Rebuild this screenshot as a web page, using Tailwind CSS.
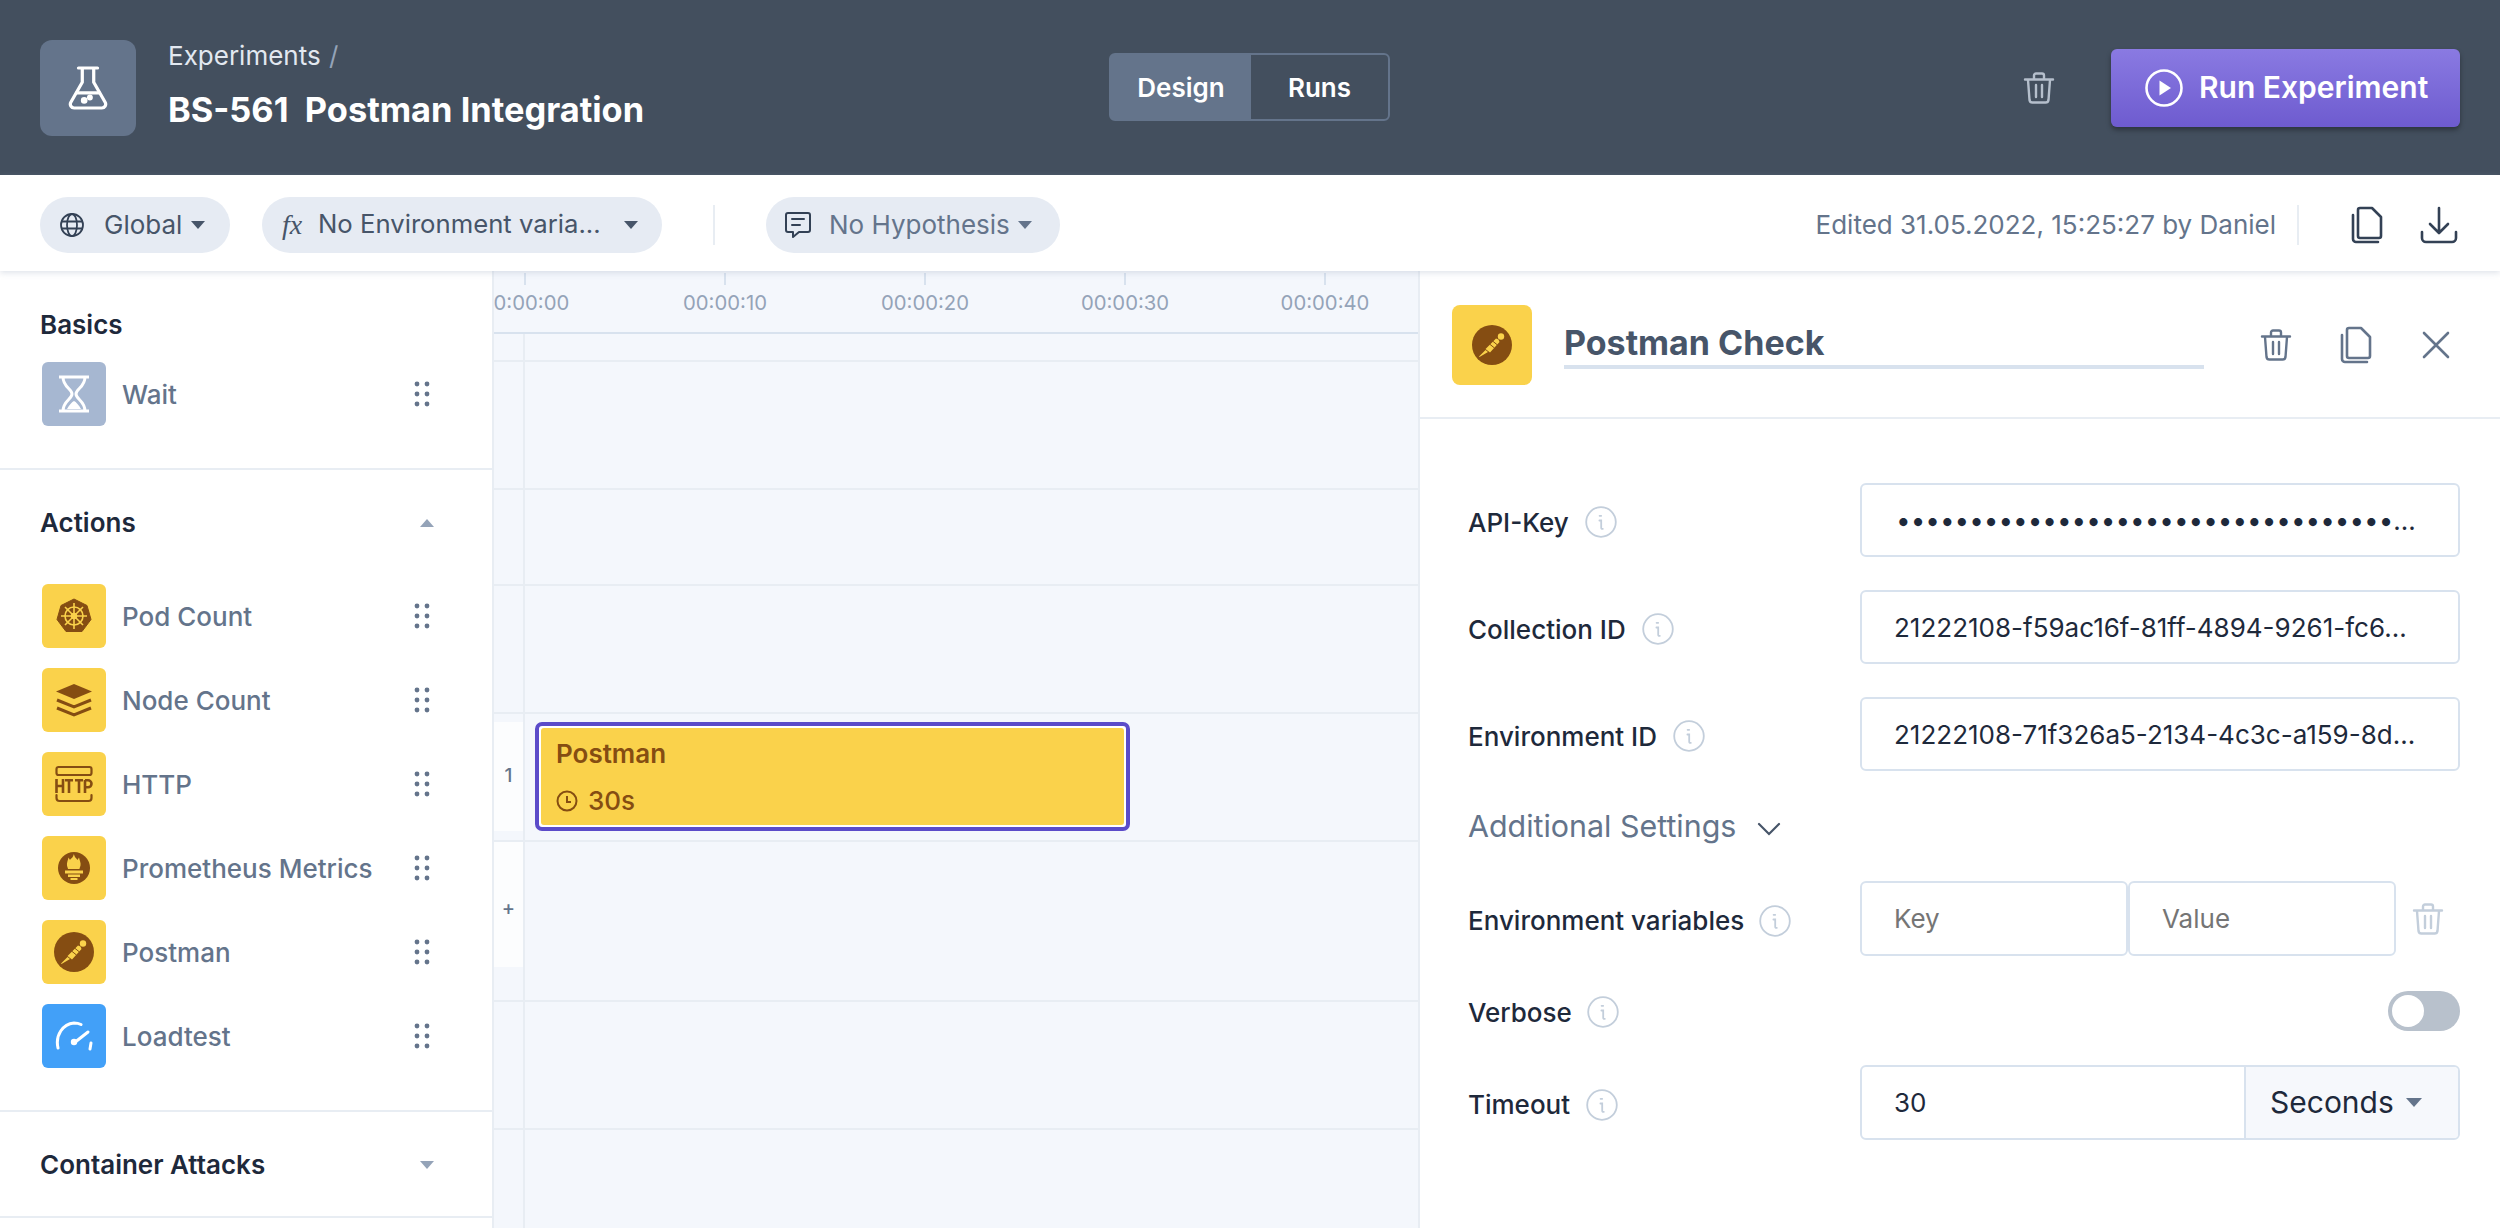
<!DOCTYPE html>
<html lang="en">
<head>
  <meta charset="UTF-8" />
  <title>BS-561 Postman Integration</title>
  <script src="https://cdn.jsdelivr.net/npm/@tailwindcss/browser@4"></script>
</head>
<body class="font-['Inter',sans-serif] w-[2500px] h-[1228px] overflow-hidden bg-white text-[#1e293b]">
  <!-- shared icons -->
  <svg class="hidden">
    <symbol id="trash" viewBox="0 0 34 34"><path d="M3 8.5h28M12 7.5V4.5a2 2 0 0 1 2-2h6a2 2 0 0 1 2 2v3M6 9l1.5 20a3 3 0 0 0 3 2.5h13a3 3 0 0 0 3-2.5L28 9M14 14v12M20 14v12" fill="none" stroke="currentColor" stroke-width="2.4" stroke-linecap="round" stroke-linejoin="round"/></symbol>
    <symbol id="copy" viewBox="0 0 34 38"><path d="M10 2h12l9 9v19a2 2 0 0 1-2 2H10a2 2 0 0 1-2-2V4a2 2 0 0 1 2-2zM3 9v24a3 3 0 0 0 3 3h22" fill="none" stroke="currentColor" stroke-width="2.6" stroke-linecap="round" stroke-linejoin="round"/></symbol>
    <symbol id="grip" viewBox="0 0 16 26"><g fill="currentColor"><circle cx="3" cy="3" r="2.4"/><circle cx="13" cy="3" r="2.4"/><circle cx="3" cy="13" r="2.4"/><circle cx="13" cy="13" r="2.4"/><circle cx="3" cy="23" r="2.4"/><circle cx="13" cy="23" r="2.4"/></g></symbol>
    <symbol id="info" viewBox="0 0 32 32"><circle cx="16" cy="16" r="14.8" fill="none" stroke="currentColor" stroke-width="1.8"/><path d="M14.6 9.8h1.6M14.4 14.5h1.8v7.2q0 1.4 1.6 1.2" fill="none" stroke="currentColor" stroke-width="1.8" stroke-linecap="round"/></symbol>
    <symbol id="postman" viewBox="0 0 40 40"><circle cx="20" cy="20" r="20" fill="#854d12"/><circle cx="29" cy="11.5" r="3.2" fill="#fad24b"/><path d="M26.5 14.5 27.5 17 18 27.5l-4.500-3.500L24 13.500zM13.500 25l2.500 2-8.500 5-.5-.5z" fill="#fad24b"/><path d="M17.500 19l5 4M20.500 16l5 4" stroke="#854d12" stroke-width="1"/></symbol>
  </svg>

  <!-- top bar -->
  <header class="h-[175px] bg-[#434f5e] flex items-center pl-[40px] pr-[40px] relative">
    <div class="w-[96px] h-[96px] rounded-[12px] bg-[#64748b] flex items-center justify-center">
      <svg class="w-[40px] h-[44px]" viewBox="0 0 42 46" fill="none" stroke="white" stroke-width="3.4" stroke-linecap="round" stroke-linejoin="round"><path d="M11 2h20M15 2v15L3 38a4 4 0 0 0 3.500 6h29a4 4 0 0 0 3.500-6L27 17V2"/><path d="M9 28h24"/><circle cx="17" cy="36" r="1.800" fill="white"/><circle cx="23" cy="33" r="1.400" fill="white"/></svg>
    </div>
    <div class="ml-[32px] w-[941px] -mt-[6px]">
      <div class="text-[26px] leading-[32px] text-[#e2e8f0] font-normal">Experiments <span class="text-[#94a3b8] ml-[1px]">/</span></div>
      <div class="mt-[18px] text-[34.400px] leading-[40px] font-bold text-white whitespace-pre">BS-561  Postman Integration</div>
    </div>
    <div class="flex h-[68px] w-[281px] -mt-[1px] rounded-[6px] border-2 border-[#64748b] text-[26px] font-semibold text-white">
      <div class="w-[140px] bg-[#64748b] flex items-center justify-center">Design</div>
      <div class="flex-1 flex items-center justify-center">Runs</div>
    </div>
    <svg class="w-[34px] h-[34px] ml-[632px] text-[#b5bfcc]"><use href="#trash"/></svg>
    <div class="ml-[55px] w-[349px] h-[78px] rounded-[6px] bg-gradient-to-b from-[#8a7ae2] to-[#6e5bcf] shadow-[0_3px_5px_rgba(0,0,0,0.35)] flex items-center pl-[34px] text-white text-[30px] font-semibold">
      <svg class="w-[38px] h-[38px]" viewBox="0 0 38 38"><circle cx="19" cy="19" r="17.5" fill="none" stroke="white" stroke-width="2.6"/><path d="M14.500 11.500 26 19l-11.500 7.500z" fill="white"/></svg>
      <span class="ml-[16px]">Run Experiment</span>
    </div>
  </header>

  <!-- toolbar -->
  <div class="h-[96px] bg-white flex items-center pl-[40px] pr-[40px] pt-[3px] relative z-10 shadow-[0_2px_6px_rgba(148,163,184,0.3)] text-[#475569]">
    <div class="w-[190px] h-[56px] rounded-full bg-[#e6ebf3] flex items-center pl-[20px] text-[26px]">
      <svg class="w-[24px] h-[24px]" viewBox="0 0 24 24" fill="none" stroke="#334155" stroke-width="1.8"><circle cx="12" cy="12" r="11"/><ellipse cx="12" cy="12" rx="5" ry="11"/><path d="M1.500 8.500h21M1.500 15.500h21"/></svg>
      <span class="ml-[20px]">Global</span>
      <span class="ml-[9px] w-0 h-0 border-x-[7px] border-x-transparent border-t-[8px] border-t-[#475569]"></span>
    </div>
    <div class="ml-[32px] w-[400px] h-[56px] rounded-full bg-[#e6ebf3] flex items-center pl-[20px] text-[25.700px]">
      <span class="font-['Liberation_Serif',serif] italic text-[28px] w-[36px]">fx</span>
      <span>No Environment varia...</span>
      <span class="ml-[23px] w-0 h-0 border-x-[7px] border-x-transparent border-t-[8px] border-t-[#475569]"></span>
    </div>
    <div class="ml-[51px] w-[2px] h-[40px] bg-[#e8edf3]"></div>
    <div class="ml-[51px] w-[294px] h-[56px] rounded-full bg-[#e6ebf3] flex items-center pl-[18px] text-[26px] text-[#64748b]">
      <svg class="w-[28px] h-[28px]" viewBox="0 0 28 28" fill="none" stroke="#334155" stroke-width="2" stroke-linejoin="round" stroke-linecap="round"><path d="M4 2h20a2 2 0 0 1 2 2v15a2 2 0 0 1-2 2h-9l-6 5v-5H4a2 2 0 0 1-2-2V4a2 2 0 0 1 2-2zM8 8h12M8 14h8"/></svg>
      <span class="ml-[17px]">No Hypothesis</span>
      <span class="ml-[8px] w-0 h-0 border-x-[7px] border-x-transparent border-t-[8px] border-t-[#64748b]"></span>
    </div>
    <div class="ml-auto text-[26px] text-[#64748b]">Edited 31.05.2022, 15:25:27 by Daniel</div>
    <div class="ml-[21px] w-[2px] h-[40px] bg-[#e8edf3]"></div>
    <svg class="ml-[51px] w-[34px] h-[38px] text-[#334155]"><use href="#copy"/></svg>
    <svg class="ml-[36px] w-[38px] h-[38px] mr-[2px]" viewBox="0 0 38 38" fill="none" stroke="#334155" stroke-width="2.6" stroke-linecap="round" stroke-linejoin="round"><path d="M19 2v24M10 18l9 9 9-9M2 26v6a4 4 0 0 0 4 4h26a4 4 0 0 0 4-4v-6"/></svg>
  </div>

  <main class="flex h-[957px]">
    <!-- step palette -->
    <aside class="w-[494px] shrink-0 border-r-2 border-[#e8edf3] text-[26px] font-medium text-[#64748b]">
      <section class="h-[199px] border-b-2 border-[#e8edf3] pt-[38px] pl-[40px]">
        <h2 class="text-[26px] leading-[32px] font-semibold text-[#1e293b]">Basics</h2>
        <div class="mt-[21px] flex items-center pl-[2px] pr-[62px]">
          <div class="w-[64px] h-[64px] rounded-[6px] bg-[#a6b7d1] flex items-center justify-center">
            <svg class="w-[32px] h-[38px]" viewBox="0 0 32 38" fill="none" stroke="white" stroke-width="3"><path d="M1 2h30M1 36h30M5 2c0 10 9 12 9 17s-9 7-9 17M27 2c0 10-9 12-9 17s9 7 9 17"/><path d="M9 34c2-4 5-7 7-8 2 1 5 4 7 8z" fill="white" stroke="none"/></svg>
          </div>
          <span class="ml-[16px]">Wait</span>
          <svg class="ml-auto w-[16px] h-[26px] text-[#64748b]"><use href="#grip"/></svg>
        </div>
      </section>

      <section class="border-b-2 border-[#e8edf3] pt-[37px] pb-[42px] pl-[40px]">
        <div class="flex items-center justify-between pr-[58px]">
          <h2 class="text-[26px] leading-[32px] font-semibold text-[#1e293b]">Actions</h2>
          <span class="w-0 h-0 border-x-[7px] border-x-transparent border-b-[8px] border-b-[#94a3b8]"></span>
        </div>
        <div class="mt-[45px] flex flex-col gap-[20px] pl-[2px] pr-[62px]">
          <div class="flex items-center">
            <div class="w-[64px] h-[64px] rounded-[6px] bg-[#fad24b] flex items-center justify-center">
              <svg class="w-[36px] h-[36px]" viewBox="0 0 36 36"><path d="M18 1 31 7.500l4 14-9 12H10l-9-12 4-14z" fill="#854d12" stroke="#854d12" stroke-linejoin="round"/><g fill="none" stroke="#fad24b" stroke-width="1.6"><circle cx="18" cy="18" r="9"/><circle cx="18" cy="18" r="2.500"/><path d="M18 5v26M5 18h26M9 9l18 18M27 9 9 27"/></g></svg>
            </div>
            <span class="ml-[16px]">Pod Count</span>
            <svg class="ml-auto w-[16px] h-[26px]"><use href="#grip"/></svg>
          </div>
          <div class="flex items-center">
            <div class="w-[64px] h-[64px] rounded-[6px] bg-[#fad24b] flex items-center justify-center">
              <svg class="w-[38px] h-[34px]" viewBox="0 0 38 34"><path d="M19 1 37 8.500 19 16 1 8.500z" fill="#854d12"/><path d="M2 17l17 7 17-7M2 25l17 7 17-7" fill="none" stroke="#854d12" stroke-width="3"/></svg>
            </div>
            <span class="ml-[16px]">Node Count</span>
            <svg class="ml-auto w-[16px] h-[26px]"><use href="#grip"/></svg>
          </div>
          <div class="flex items-center">
            <div class="w-[64px] h-[64px] rounded-[6px] bg-[#fad24b] flex items-center justify-center">
              <svg class="w-[40px] h-[38px]" viewBox="0 0 40 38" fill="none" stroke="#854d12" stroke-width="2.2" stroke-linecap="round"><rect x="2.500" y="2" width="35" height="8" rx="2"/><path d="M2.500 30v3a3 3 0 0 0 3 3h29a3 3 0 0 0 3-3v-3"/><path stroke-width="2.600" stroke-linecap="butt" d="M2.500 14v14M9 14v14M2.500 21H9M11 15.300h8M15 15v13M21 15.300h8M25 15v13M31 15v13M31 15.300h3a3.500 3.500 0 0 1 0 7h-3"/></svg>
            </div>
            <span class="ml-[16px]">HTTP</span>
            <svg class="ml-auto w-[16px] h-[26px]"><use href="#grip"/></svg>
          </div>
          <div class="flex items-center">
            <div class="w-[64px] h-[64px] rounded-[6px] bg-[#fad24b] flex items-center justify-center">
              <svg class="w-[32px] h-[32px]" viewBox="0 0 32 32"><circle cx="16" cy="16" r="16" fill="#854d12"/><path d="M16 2.500c.5 3 2.500 3.500 3.500 5.500.5-1 1-1.500 1.500-2.500.5 3 2 5 1.500 8-.3 1.500-1 2.500-1 3.500h-11.500c0-1-.8-2-1-3.500-.5-3 1-5 1.500-8 .5 1 1 1.500 1.500 2.500 1-2 3.500-2.500 3.500-5.500z" fill="#fad24b"/><path d="M7 18.500h18v3H7zM10 22.500h12v2.500H10zM12.500 26h7v2h-7z" fill="#fad24b"/></svg>
            </div>
            <span class="ml-[16px]">Prometheus Metrics</span>
            <svg class="ml-auto w-[16px] h-[26px]"><use href="#grip"/></svg>
          </div>
          <div class="flex items-center">
            <div class="w-[64px] h-[64px] rounded-[6px] bg-[#fad24b] flex items-center justify-center">
              <svg class="w-[40px] h-[40px]"><use href="#postman"/></svg>
            </div>
            <span class="ml-[16px]">Postman</span>
            <svg class="ml-auto w-[16px] h-[26px]"><use href="#grip"/></svg>
          </div>
          <div class="flex items-center">
            <div class="w-[64px] h-[64px] rounded-[6px] bg-[#42a0f8] flex items-center justify-center">
              <svg class="w-[38px] h-[30px]" viewBox="0 0 38 30" fill="none" stroke="white" stroke-width="3" stroke-linecap="round"><path d="M3 27C0 14 8 3 19 2c3 0 5 .5 7 1.500"/><path d="M36 22l-1 6"/><path d="M19 22 33 11"/><circle cx="19" cy="21" r="3.200" fill="white" stroke="none"/></svg>
            </div>
            <span class="ml-[16px]">Loadtest</span>
            <svg class="ml-auto w-[16px] h-[26px]"><use href="#grip"/></svg>
          </div>
        </div>
      </section>

      <section class="border-b-2 border-[#e8edf3] pt-[37px] pb-[35px] pl-[40px]">
        <div class="flex items-center justify-between pr-[58px]">
          <h2 class="text-[26px] leading-[32px] font-semibold text-[#1e293b]">Container Attacks</h2>
          <span class="w-0 h-0 border-x-[7px] border-x-transparent border-t-[8px] border-t-[#94a3b8]"></span>
        </div>
      </section>
    </aside>

    <!-- timeline -->
    <div class="w-[926px] shrink-0 bg-[#f4f7fc] relative overflow-hidden">
      <div class="h-[63px] border-b-2 border-[#d8e2ee] relative text-[20.300px] text-[#94a3b8] overflow-hidden">
        <div class="flex h-full w-[1000px] -ml-[69px] pt-[2px]">
          <div class="w-[200px] shrink-0 flex flex-col items-center"><i class="w-[2px] h-[12px] bg-[#d8e2ee]"></i><span class="mt-[3px]">00:00:00</span></div>
          <div class="w-[200px] shrink-0 flex flex-col items-center"><i class="w-[2px] h-[12px] bg-[#d8e2ee]"></i><span class="mt-[3px]">00:00:10</span></div>
          <div class="w-[200px] shrink-0 flex flex-col items-center"><i class="w-[2px] h-[12px] bg-[#d8e2ee]"></i><span class="mt-[3px]">00:00:20</span></div>
          <div class="w-[200px] shrink-0 flex flex-col items-center"><i class="w-[2px] h-[12px] bg-[#d8e2ee]"></i><span class="mt-[3px]">00:00:30</span></div>
          <div class="w-[200px] shrink-0 flex flex-col items-center"><i class="w-[2px] h-[12px] bg-[#d8e2ee]"></i><span class="mt-[3px]">00:00:40</span></div>
        </div>
      </div>
      <div class="flex flex-col">
        <div class="h-[28px] border-b-2 border-[#e8edf3]"></div>
        <div class="h-[128px] border-b-2 border-[#e8edf3]"></div>
        <div class="h-[96px] border-b-2 border-[#e8edf3]"></div>
        <div class="h-[128px] border-b-2 border-[#e8edf3]"></div>
        <div class="h-[128px] border-b-2 border-[#e8edf3]"></div>
        <div class="h-[160px] border-b-2 border-[#e8edf3]"></div>
        <div class="h-[128px] border-b-2 border-[#e8edf3]"></div>
      </div>
      <!-- lane gutter -->
      <div class="absolute left-[29px] top-[63px] bottom-0 w-[2px] bg-[#e8edf3]"></div>
      <div class="absolute left-0 top-[451px] w-[29px] h-[109px] bg-[#fcfdfe] flex items-center justify-center text-[19px] font-medium text-[#64748b]">1</div>
      <div class="absolute left-0 top-[571px] w-[29px] h-[125px] bg-[#fcfdfe] flex justify-center pt-[51px] text-[20px] font-medium text-[#64748b]">+</div>
      <!-- step block on the canvas -->
      <div class="absolute left-[41px] top-[451px] w-[595px] h-[109px] rounded-[7px] border-4 border-[#5b4bc9] bg-white p-[2px]">
        <div class="h-full rounded-[3px] bg-[#fad24b] pl-[15px] text-[#854d12]">
          <div class="pt-[8px] text-[26px] leading-[36px] font-semibold">Postman</div>
          <div class="mt-[13px] flex items-center text-[26px] leading-[32px] font-medium">
            <svg class="w-[22px] h-[22px]" viewBox="0 0 22 22" fill="none" stroke="#854d12" stroke-width="2"><circle cx="11" cy="11" r="9.500"/><path d="M11 6v6h4"/></svg>
            <span class="ml-[10px]">30s</span>
          </div>
        </div>
      </div>
    </div>

    <!-- step settings -->
    <div class="w-[1082px] shrink-0 border-l-2 border-[#e8edf3] -ml-[2px] bg-white relative">
      <div class="h-[148px] border-b-2 border-[#e8edf3] flex items-start pl-[32px]">
        <div class="mt-[34px] w-[80px] h-[80px] rounded-[8px] bg-[#fad24b] flex items-center justify-center shrink-0">
          <svg class="w-[40px] h-[40px]"><use href="#postman"/></svg>
        </div>
        <div class="ml-[32px] mt-[51px] w-[640px] h-[47px] border-b-4 border-[#d8e2ee] text-[34px] leading-[42px] font-bold text-[#475569] shrink-0">Postman Check</div>
        <svg class="ml-[55px] mt-[57px] w-[34px] h-[34px] text-[#64748b]"><use href="#trash"/></svg>
        <svg class="ml-[46px] mt-[55px] w-[34px] h-[38px] text-[#64748b]"><use href="#copy"/></svg>
        <svg class="ml-[49px] mt-[60px] w-[28px] h-[28px]" viewBox="0 0 28 28" fill="none" stroke="#64748b" stroke-width="2.600" stroke-linecap="round"><path d="M2 2l24 24M26 2 2 26"/></svg>
      </div>

      <div class="pt-[64px] pl-[48px] pr-[40px] text-[26px] text-[#1e293b]">
        <div class="flex items-center h-[74px]">
          <div class="w-[392px] flex items-center font-medium pt-[4px]">API-Key<svg class="ml-[16px] w-[32px] h-[32px] text-[#c3cedb]"><use href="#info"/></svg></div>
          <div class="flex-1 min-w-0 h-full rounded-[6px] border-2 border-[#d8e2ee] pl-[34px] flex items-center whitespace-nowrap">••••••••••••••••••••••••••••••••••...</div>
        </div>
        <div class="flex items-center h-[74px] mt-[33px]">
          <div class="w-[392px] flex items-center font-medium pt-[4px]">Collection ID<svg class="ml-[16px] w-[32px] h-[32px] text-[#c3cedb]"><use href="#info"/></svg></div>
          <div class="flex-1 min-w-0 h-full rounded-[6px] border-2 border-[#d8e2ee] pl-[32px] flex items-center whitespace-nowrap">21222108-f59ac16f-81ff-4894-9261-fc6...</div>
        </div>
        <div class="flex items-center h-[74px] mt-[33px]">
          <div class="w-[392px] flex items-center font-medium pt-[4px]">Environment ID<svg class="ml-[16px] w-[32px] h-[32px] text-[#c3cedb]"><use href="#info"/></svg></div>
          <div class="flex-1 min-w-0 h-full rounded-[6px] border-2 border-[#d8e2ee] pl-[32px] flex items-center whitespace-nowrap">21222108-71f326a5-2134-4c3c-a159-8d...</div>
        </div>
        <div class="flex items-center h-[40px] mt-[36px] text-[30.400px] text-[#64748b]">Additional Settings
          <svg class="ml-[21px] mt-[4px] w-[24px] h-[14px]" viewBox="0 0 24 14" fill="none" stroke="#475569" stroke-width="2.200" stroke-linecap="round"><path d="M2 2l10 10L22 2"/></svg>
        </div>
        <div class="flex items-center h-[75px] mt-[34px]">
          <div class="w-[392px] flex items-center font-medium pt-[4px]">Environment variables<svg class="ml-[15px] w-[32px] h-[32px] text-[#c3cedb]"><use href="#info"/></svg></div>
          <div class="w-[268px] h-full rounded-[6px] border-2 border-[#d8e2ee] pl-[32px] flex items-center text-[#757575]">Key</div>
          <div class="w-[268px] h-full rounded-[6px] border-2 border-[#d8e2ee] pl-[32px] flex items-center text-[#757575]">Value</div>
          <svg class="ml-[15px] w-[34px] h-[34px] text-[#c3cedb]"><use href="#trash"/></svg>
        </div>
        <div class="flex items-center h-[40px] mt-[35px]">
          <div class="flex items-center font-medium pt-[2px]">Verbose<svg class="ml-[15px] w-[32px] h-[32px] text-[#c3cedb]"><use href="#info"/></svg></div>
          <div class="ml-auto w-[72px] h-[40px] rounded-full bg-[#b8c1cc] p-[4px]"><div class="w-[32px] h-[32px] rounded-full bg-white"></div></div>
        </div>
        <div class="flex items-center h-[75px] mt-[34px]">
          <div class="w-[392px] flex items-center font-medium pt-[4px]">Timeout<svg class="ml-[16px] w-[32px] h-[32px] text-[#c3cedb]"><use href="#info"/></svg></div>
          <div class="flex-1 h-full rounded-[6px] border-2 border-[#d8e2ee] flex items-center overflow-hidden">
            <span class="flex-1 pl-[32px]">30</span>
            <div class="w-[214px] h-full border-l-2 border-[#d8e2ee] bg-[#f6f8fc] flex items-center pl-[24px] text-[30px]">Seconds<span class="ml-[12px] w-0 h-0 border-x-[8px] border-x-transparent border-t-[9px] border-t-[#64748b]"></span></div>
          </div>
        </div>
      </div>
    </div>
  </main>
</body>
</html>
